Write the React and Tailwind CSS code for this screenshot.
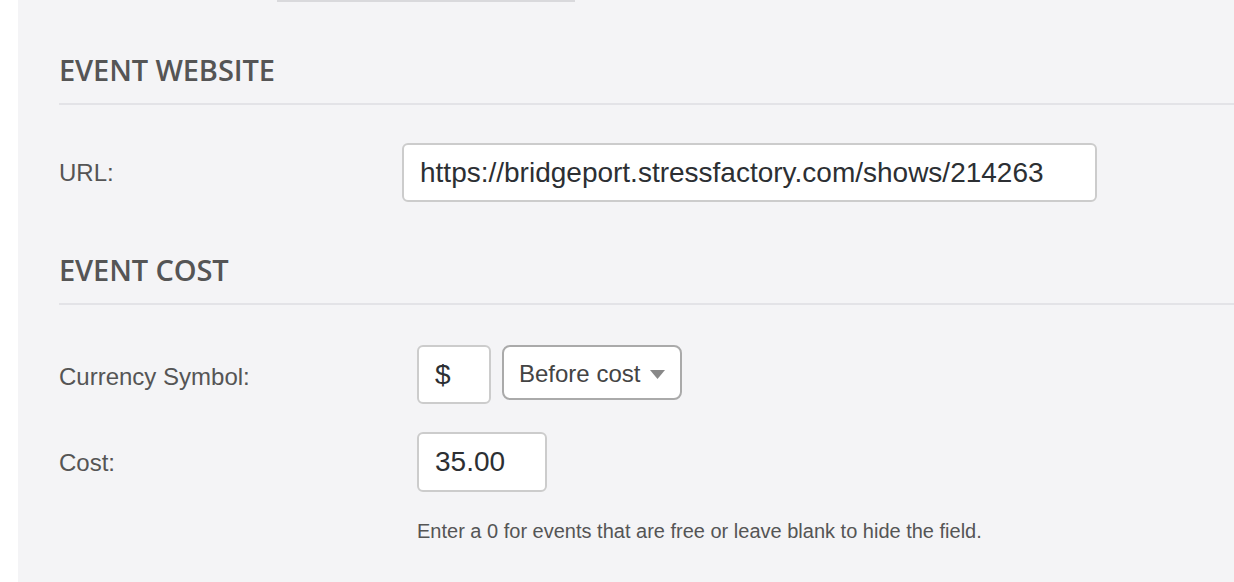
const sans = { fontFamily: '"Liberation Sans", Arial, sans-serif' };

const SectionTitle = ({ children, className = '' }) => (
  <div className={`border-b-2 border-[#e3e3e7] pb-[15px] ${className}`}>
    <h2 className="text-[29px] leading-[36px] font-semibold text-[#555555] tracking-[-0.1px]" style={{ fontFamily: '"Open Sans", sans-serif' }}>
      {children}
    </h2>
  </div>
);

const App = () => {
  return (
    <div className="min-h-screen h-[582px] bg-white flex overflow-hidden" style={sans}>
      <div className="w-[18px] flex-shrink-0 bg-white" />
      <div className="flex-1 bg-[#f4f4f6] pl-[41px]">
        {/* leftover field above */}
        <div className="ml-[218px] w-[298px] h-[2px] bg-[#d9d9dc]" />

        <SectionTitle className="mt-[50px]">EVENT WEBSITE</SectionTitle>

        <div className="flex items-center mt-[38px]">
          <label className="w-[343px] text-[24px] text-[#555555]">URL:</label>
          <div className="w-[695px] h-[59px] bg-white border-2 border-[#cccccc] rounded-[6px] pl-[16px] flex items-center text-[28px] text-[#2c2f33]">
            https://bridgeport.stressfactory.com/shows/214263
          </div>
        </div>

        <SectionTitle className="mt-[50px]">EVENT COST</SectionTitle>

        <div className="flex items-center mt-[40px]">
          <label className="w-[358px] text-[24px] text-[#555555] pt-[4px]">Currency Symbol:</label>
          <div className="flex items-start gap-[11px]">
            <div className="w-[74px] h-[59px] bg-white border-2 border-[#cccccc] rounded-[6px] pl-[16px] flex items-center text-[28px] text-[#2c2f33]">
              $
            </div>
            <div className="w-[180px] h-[55px] bg-white border-2 border-[#aaaaaa] rounded-[8px] pl-[15px] pr-[15px] pt-[3px] flex items-center justify-between text-[24px] text-[#444444]">
              <span>Before cost</span>
              <svg width="15" height="9" viewBox="0 0 15 9">
                <path d="M0 0 L15 0 L7.5 9 Z" fill="#888888" />
              </svg>
            </div>
          </div>
        </div>

        <div className="flex items-center mt-[28px]">
          <label className="w-[358px] text-[24px] text-[#555555] pt-[2px]">Cost:</label>
          <div className="w-[130px] h-[60px] bg-white border-2 border-[#cccccc] rounded-[6px] pl-[16px] flex items-center text-[28px] text-[#2c2f33]">
            35.00
          </div>
        </div>

        <p className="ml-[358px] mt-[25px] text-[20px] leading-[28px] text-[#555555]">
          Enter a 0 for events that are free or leave blank to hide the field.
        </p>
      </div>
    </div>
  );
};

export default App;
